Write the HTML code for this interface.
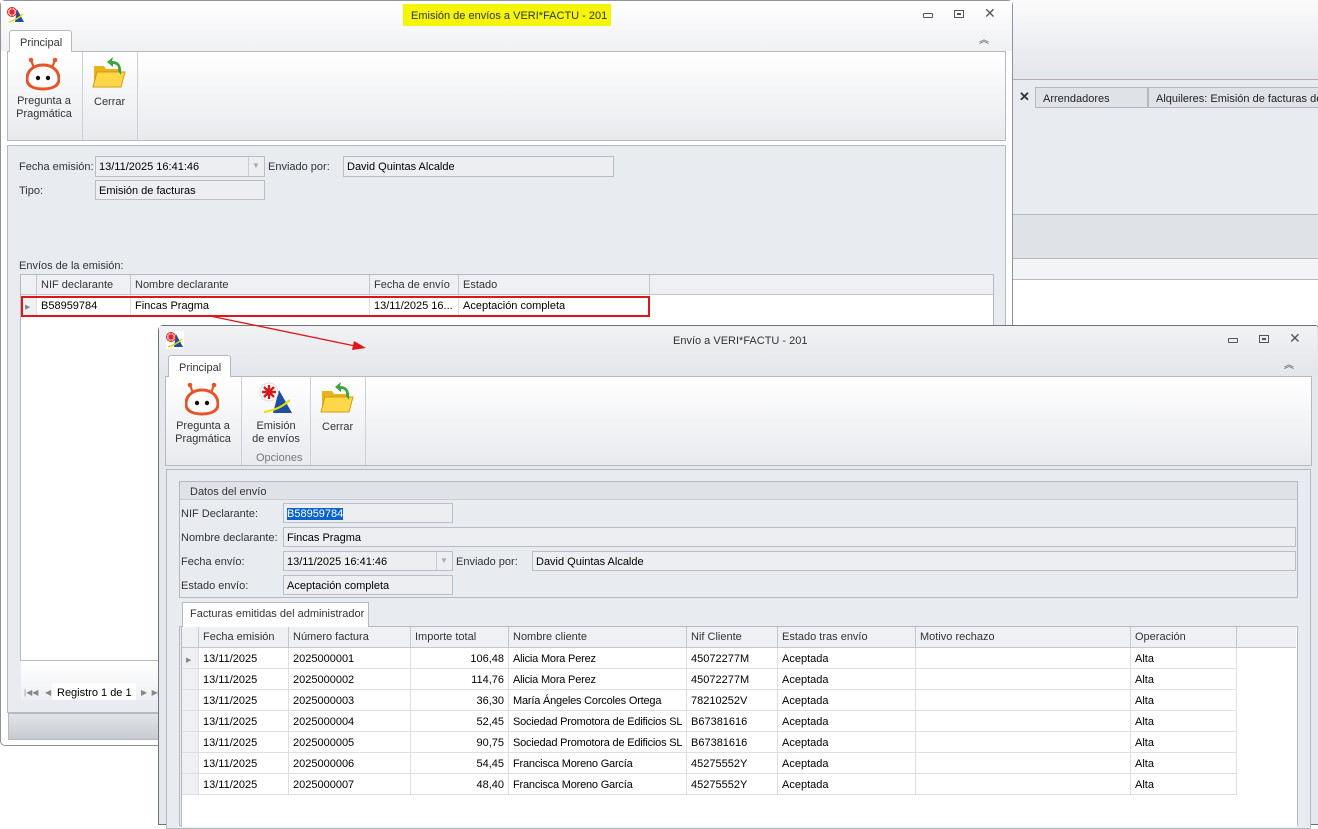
<!DOCTYPE html>
<html><head><meta charset="utf-8">
<style>
*{box-sizing:border-box;margin:0;padding:0}
body{width:1318px;height:822px;overflow:hidden;background:#fff;font-family:"Liberation Sans",Tahoma,sans-serif;font-size:11px;color:#000;position:relative}
.a{position:absolute}
.t{position:absolute;white-space:nowrap;line-height:14px}
.inp{position:absolute;background:#eceef1;border:1px solid #b9bec6;padding:3px 3px 2px;line-height:14px;white-space:nowrap;overflow:hidden}
.g{color:#333}
.hdr{position:absolute;background:#eef0f3;border-right:1px solid #c3c7ce;border-bottom:1px solid #c3c7ce;padding:3px 4px;line-height:14px;color:#333;white-space:nowrap}
.c{position:absolute;border-right:1px solid #dcdfe4;border-bottom:1px solid #dcdfe4;padding:4px 4px 3px;line-height:14px;white-space:nowrap;background:#fff}
</style></head><body>

<div class="a" style="left:1010px;top:0;width:308px;height:80px;background:linear-gradient(#fbfbfc,#e2e5ea)"></div>
<div class="a" style="left:1010px;top:79px;width:308px;height:1px;background:#b9a6c0"></div>
<div class="a" style="left:1010px;top:80px;width:308px;height:134px;background:#e8ebf0"></div>
<div class="t" style="left:1019px;top:90px;font-weight:bold;color:#333;font-size:13px">✕</div>
<div class="a" style="left:1035px;top:87px;width:113px;height:21px;background:#dfe2e7;border:1px solid #b5bac2"></div>
<div class="t" style="left:1043px;top:92px;color:#222">Arrendadores</div>
<div class="a" style="left:1148px;top:87px;width:175px;height:21px;background:#dfe2e7;border:1px solid #b5bac2"></div>
<div class="t" style="left:1156px;top:92px;color:#222">Alquileres: Emisión de facturas de</div>
<div class="a" style="left:1010px;top:214px;width:308px;height:45px;background:#dfe2e6;border-top:1px solid #b5bac2;border-bottom:1px solid #b5bac2"></div>
<div class="a" style="left:1010px;top:259px;width:308px;height:21px;background:#f3f4f6;border-bottom:1px solid #b5bac2"></div>

<!-- Window 1 -->
<div class="a" style="left:0;top:0;width:1013px;height:746px;background:#fff;border:1px solid #8e939b;border-radius:5px"></div>
<div class="a" style="left:1px;top:1px;width:1011px;height:50px;background:linear-gradient(#fff,#f0f1f3)"></div>
<svg class="a" style="left:7px;top:6px" width="18" height="18" viewBox="0 0 18 18"><rect x="0" y="0" width="18" height="18" fill="#fff"/><path d="M10 3 L17 16 L8 16Z" fill="#1d4fa0"/><circle cx="5" cy="6" r="4.5" fill="#fff" stroke="#d22" stroke-width="1"/><path d="M5 2v8M1.5 6h7M2.5 3.5l5 5M7.5 3.5l-5 5" stroke="#d22" stroke-width="1.3"/><path d="M2 16 Q10 14 16 8" stroke="#e8d700" stroke-width="1.5" fill="none"/></svg>
<div class="a" style="left:403px;top:4px;width:208px;height:22px;background:#f5f50a"></div>
<div class="t" style="left:411px;top:9px;color:#333">Emisión de envíos a VERI*FACTU - 201</div>
<div class="a" style="left:923px;top:13px;width:10px;height:5px;border:1px solid #555;border-radius:1px"></div>
<div class="a" style="left:954px;top:10px;width:10px;height:8px;border:1px solid #555"></div><div class="a" style="left:957px;top:13px;width:4px;height:2px;background:#555"></div>
<div class="t" style="left:984px;top:6px;font-size:14px;color:#555">✕</div>
<div class="t" style="left:979px;top:34px;font-size:10px;color:#444">︽</div>
<div class="a" style="left:9px;top:30px;width:63px;height:22px;background:#fff;border:1px solid #b5bac2;border-bottom:none;border-radius:3px 3px 0 0;z-index:2"></div>
<div class="t" style="left:20px;top:36px;z-index:3;color:#333">Principal</div>
<div class="a" style="left:7px;top:51px;width:999px;height:90px;background:linear-gradient(#fff,#e8eaee);border:1px solid #b5bac2"></div>
<div class="a" style="left:82px;top:52px;width:1px;height:88px;background:#cdd1d7"></div>
<div class="a" style="left:137px;top:52px;width:1px;height:88px;background:#cdd1d7"></div>
<svg class="a" style="left:26px;top:57px" width="34" height="34" viewBox="0 0 34 34"><circle cx="5" cy="3" r="2.3" fill="#e8542a"/><circle cx="29" cy="3" r="2.3" fill="#e8542a"/><path d="M5 3 L8 11 M29 3 L26 11" stroke="#e8542a" stroke-width="2.2"/><path d="M17 8 C28 8 33 15 33 22 C33 29 26 32 17 32 C8 32 1 29 1 22 C1 15 6 8 17 8Z" fill="#fff" stroke="#e8542a" stroke-width="3"/><circle cx="12" cy="21" r="2.2" fill="#111"/><circle cx="22" cy="21" r="2.2" fill="#111"/></svg>
<svg class="a" style="left:92px;top:57px" width="34" height="32" viewBox="0 0 34 32"><path d="M2 9h10l2 3h14v18H2Z" fill="#e8b21a"/><path d="M5 15h28l-4 15H1Z" fill="#ffd84a" stroke="#d49a10" stroke-width="1"/><path d="M20 4 C28 4 30 10 29 18 L26 14 C27 10 25 7 21 7 L21 10 L15 5 L21 0Z" fill="#3aa53a"/></svg>
<div class="t" style="left:14px;top:95px;color:#333;text-align:center;width:60px;line-height:13px">Pregunta a<br>Pragmática</div>
<div class="t" style="left:94px;top:95px;color:#333">Cerrar</div>
<div class="a" style="left:7px;top:145px;width:999px;height:568px;background:#e8ebf0;border:1px solid #b5bac2"></div>
<div class="t g" style="left:19px;top:160px">Fecha emisión:</div>
<div class="inp" style="left:95px;top:156px;width:170px;height:21px">13/11/2025 16:41:46</div>
<div class="a" style="left:248px;top:157px;width:1px;height:19px;background:#ccc"></div>
<div class="t" style="left:252px;top:159px;font-size:8px;color:#aaa">▼</div>
<div class="t g" style="left:268px;top:160px">Enviado por:</div>
<div class="inp" style="left:343px;top:156px;width:271px;height:21px">David Quintas Alcalde</div>
<div class="t g" style="left:19px;top:184px">Tipo:</div>
<div class="inp" style="left:95px;top:180px;width:170px;height:20px">Emisión de facturas</div>
<div class="t g" style="left:19px;top:259px">Envíos de la emisión:</div>
<div class="a" style="left:20px;top:274px;width:974px;height:387px;background:#fff;border:1px solid #b5bac2"></div>
<div class="hdr" style="left:21px;top:275px;width:16px;height:20px"></div>
<div class="hdr" style="left:37px;top:275px;width:94px;height:20px">NIF declarante</div>
<div class="hdr" style="left:131px;top:275px;width:239px;height:20px">Nombre declarante</div>
<div class="hdr" style="left:370px;top:275px;width:89px;height:20px">Fecha de envío</div>
<div class="hdr" style="left:459px;top:275px;width:191px;height:20px">Estado</div>
<div class="hdr" style="left:650px;top:275px;width:343px;height:20px;border-right:none"></div>
<div class="c" style="left:21px;top:295px;width:16px;height:21px;background:#eef0f3"><span style="font-size:7px;color:#888">▶</span></div>
<div class="c" style="left:37px;top:295px;width:94px;height:21px">B58959784</div>
<div class="c" style="left:131px;top:295px;width:239px;height:21px">Fincas Pragma</div>
<div class="c" style="left:370px;top:295px;width:89px;height:21px">13/11/2025 16...</div>
<div class="c" style="left:459px;top:295px;width:191px;height:21px">Aceptación completa</div>
<div class="a" style="left:21px;top:296px;width:629px;height:21px;border:2px solid #e0141b"></div>
<div class="a" style="left:21px;top:660px;width:972px;height:40px;background:linear-gradient(#fff,#eef0f3);border-top:1px solid #b5bac2"></div>
<div class="t" style="left:24px;top:686px;font-size:8px;color:#888">|◀◀ &nbsp; ◀</div>
<div class="a" style="left:52px;top:683px;width:84px;height:17px;background:#fff"></div>
<div class="t" style="left:57px;top:686px">Registro 1 de 1</div>
<div class="t" style="left:141px;top:686px;font-size:8px;color:#888">▶ &nbsp;▶▶</div>
<div class="a" style="left:8px;top:713px;width:998px;height:27px;background:linear-gradient(#e2e4e8,#c7cad0);border:1px solid #b5bac2"></div>

<svg class="a" style="left:200px;top:310px;z-index:5" width="180" height="50"><line x1="10" y1="6" x2="160" y2="37" stroke="#e0141b" stroke-width="1.3"/><path d="M166 38 L154 31 L152 40Z" fill="#e0141b"/></svg>

<!-- Window 2 -->
<div class="a" style="left:158px;top:325px;width:1162px;height:500px;background:#e4e7eb;border:1px solid #6e737b;border-radius:5px 5px 0 0"></div>
<div class="a" style="left:159px;top:326px;width:1158px;height:50px;background:linear-gradient(#f1f2f4,#e3e6ea)"></div>
<svg class="a" style="left:166px;top:331px" width="18" height="18" viewBox="0 0 18 18"><rect width="18" height="18" fill="#fff"/><path d="M10 3 L17 16 L8 16Z" fill="#1d4fa0"/><circle cx="5" cy="6" r="4.5" fill="#fff" stroke="#d22"/><path d="M5 2v8M1.5 6h7M2.5 3.5l5 5M7.5 3.5l-5 5" stroke="#d22" stroke-width="1.3"/><path d="M2 16 Q10 14 16 8" stroke="#e8d700" stroke-width="1.5" fill="none"/></svg>
<div class="t" style="left:673px;top:334px;color:#333">Envío a VERI*FACTU - 201</div>
<div class="a" style="left:1228px;top:338px;width:10px;height:5px;border:1px solid #555;border-radius:1px"></div>
<div class="a" style="left:1259px;top:335px;width:10px;height:8px;border:1px solid #555"></div><div class="a" style="left:1262px;top:338px;width:4px;height:2px;background:#555"></div>
<div class="t" style="left:1289px;top:331px;font-size:14px;color:#555">✕</div>
<div class="t" style="left:1284px;top:359px;font-size:10px;color:#444">︽</div>
<div class="a" style="left:168px;top:355px;width:63px;height:22px;background:#fff;border:1px solid #b5bac2;border-bottom:none;border-radius:3px 3px 0 0;z-index:2"></div>
<div class="t" style="left:179px;top:361px;z-index:3;color:#333">Principal</div>
<div class="a" style="left:165px;top:376px;width:1147px;height:90px;background:linear-gradient(#fff,#e8eaee);border:1px solid #b5bac2"></div>
<div class="a" style="left:241px;top:377px;width:1px;height:88px;background:#cdd1d7"></div>
<div class="a" style="left:310px;top:377px;width:1px;height:88px;background:#cdd1d7"></div>
<div class="a" style="left:365px;top:377px;width:1px;height:88px;background:#cdd1d7"></div>
<svg class="a" style="left:185px;top:382px" width="34" height="34" viewBox="0 0 34 34"><circle cx="5" cy="3" r="2.3" fill="#e8542a"/><circle cx="29" cy="3" r="2.3" fill="#e8542a"/><path d="M5 3 L8 11 M29 3 L26 11" stroke="#e8542a" stroke-width="2.2"/><path d="M17 8 C28 8 33 15 33 22 C33 29 26 32 17 32 C8 32 1 29 1 22 C1 15 6 8 17 8Z" fill="#fff" stroke="#e8542a" stroke-width="3"/><circle cx="12" cy="21" r="2.2" fill="#111"/><circle cx="22" cy="21" r="2.2" fill="#111"/></svg>
<svg class="a" style="left:259px;top:382px" width="34" height="34" viewBox="0 0 34 34"><path d="M20 8 L33 31 L14 31Z" fill="#1d4fa0"/><circle cx="10" cy="10" r="9" fill="#fff" stroke="#ddd"/><path d="M10 3v14M3 10h14M5 5l10 10M15 5L5 15" stroke="#d41a1a" stroke-width="2.4"/><path d="M5 30 Q20 28 31 18" stroke="#e8e000" stroke-width="2" fill="none"/></svg>
<svg class="a" style="left:320px;top:382px" width="34" height="32" viewBox="0 0 34 32"><path d="M2 9h10l2 3h14v18H2Z" fill="#e8b21a"/><path d="M5 15h28l-4 15H1Z" fill="#ffd84a" stroke="#d49a10" stroke-width="1"/><path d="M20 4 C28 4 30 10 29 18 L26 14 C27 10 25 7 21 7 L21 10 L15 5 L21 0Z" fill="#3aa53a"/></svg>
<div class="t" style="left:173px;top:420px;color:#333;text-align:center;width:60px;line-height:13px">Pregunta a<br>Pragmática</div>
<div class="t" style="left:250px;top:420px;color:#333;text-align:center;width:52px;line-height:13px">Emisión<br>de envíos</div>
<div class="t" style="left:256px;top:451px;color:#777">Opciones</div>
<div class="t" style="left:322px;top:420px;color:#333">Cerrar</div>
<div class="a" style="left:166px;top:469px;width:1145px;height:360px;background:#e8ebf0;border:1px solid #b5bac2"></div>
<div class="a" style="left:179px;top:481px;width:1119px;height:117px;border:1px solid #b5bac2"></div>
<div class="a" style="left:180px;top:482px;width:1117px;height:18px;background:#dfe2e7;border-bottom:1px solid #c8ccd2"></div>
<div class="t" style="left:190px;top:485px;color:#333">Datos del envío</div>
<div class="t g" style="left:181px;top:507px">NIF Declarante:</div>
<div class="inp" style="left:283px;top:503px;width:170px;height:20px"><span style="background:#0a64c8;color:#fff">B58959784</span></div>
<div class="t g" style="left:181px;top:531px">Nombre declarante:</div>
<div class="inp" style="left:283px;top:527px;width:1013px;height:20px">Fincas Pragma</div>
<div class="t g" style="left:181px;top:555px">Fecha envío:</div>
<div class="inp" style="left:283px;top:551px;width:170px;height:20px">13/11/2025 16:41:46</div>
<div class="a" style="left:436px;top:552px;width:1px;height:18px;background:#ccc"></div>
<div class="t" style="left:440px;top:554px;font-size:8px;color:#aaa">▼</div>
<div class="t g" style="left:456px;top:555px">Enviado por:</div>
<div class="inp" style="left:532px;top:551px;width:764px;height:20px">David Quintas Alcalde</div>
<div class="t g" style="left:181px;top:579px">Estado envío:</div>
<div class="inp" style="left:283px;top:575px;width:170px;height:20px">Aceptación completa</div>
<div class="a" style="left:182px;top:602px;width:187px;height:25px;background:#fff;border:1px solid #b5bac2;border-bottom:none;z-index:2"></div>
<div class="t" style="left:190px;top:607px;z-index:3;color:#333">Facturas emitidas del administrador</div>
<div class="a" style="left:179px;top:626px;width:1119px;height:200px;border:1px solid #b5bac2;background:#e8ebf0"></div>
<div class="a" style="left:181px;top:627px;width:1116px;height:200px;background:#fff;border-left:1px solid #b5bac2"></div>
<div class="hdr" style="left:182px;top:627px;width:17px;height:21px"></div>
<div class="hdr" style="left:199px;top:627px;width:90px;height:21px">Fecha emisión</div>
<div class="hdr" style="left:289px;top:627px;width:122px;height:21px">Número factura</div>
<div class="hdr" style="left:411px;top:627px;width:98px;height:21px">Importe total</div>
<div class="hdr" style="left:509px;top:627px;width:178px;height:21px">Nombre cliente</div>
<div class="hdr" style="left:687px;top:627px;width:91px;height:21px">Nif Cliente</div>
<div class="hdr" style="left:778px;top:627px;width:138px;height:21px">Estado tras envío</div>
<div class="hdr" style="left:916px;top:627px;width:215px;height:21px">Motivo rechazo</div>
<div class="hdr" style="left:1131px;top:627px;width:106px;height:21px">Operación</div>
<div class="hdr" style="left:1237px;top:627px;width:59px;height:21px;border-right:none"></div>

<div id="rows"></div>
<script>
var d=[["2025000001","106,48","Alicia Mora Perez","45072277M"],["2025000002","114,76","Alicia Mora Perez","45072277M"],["2025000003","36,30","María Ángeles Corcoles Ortega","78210252V"],["2025000004","52,45","Sociedad Promotora de Edificios SL","B67381616"],["2025000005","90,75","Sociedad Promotora de Edificios SL","B67381616"],["2025000006","54,45","Francisca Moreno García","45275552Y"],["2025000007","48,40","Francisca Moreno García","45275552Y"]];
var h="";
d.forEach(function(r,i){var y=648+i*21;
h+='<div class="c" style="left:182px;top:'+y+'px;width:17px;height:21px;background:#eef0f3">'+(i==0?'<span style="font-size:7px;color:#888">▶</span>':'')+'</div>';
h+='<div class="c" style="left:199px;top:'+y+'px;width:90px;height:21px">13/11/2025</div>';
h+='<div class="c" style="left:289px;top:'+y+'px;width:122px;height:21px">'+r[0]+'</div>';
h+='<div class="c" style="left:411px;top:'+y+'px;width:98px;height:21px;text-align:right">'+r[1]+'</div>';
h+='<div class="c" style="left:509px;top:'+y+'px;width:178px;height:21px;overflow:hidden;letter-spacing:-0.2px">'+r[2]+'</div>';
h+='<div class="c" style="left:687px;top:'+y+'px;width:91px;height:21px">'+r[3]+'</div>';
h+='<div class="c" style="left:778px;top:'+y+'px;width:138px;height:21px">Aceptada</div>';
h+='<div class="c" style="left:916px;top:'+y+'px;width:215px;height:21px"></div>';
h+='<div class="c" style="left:1131px;top:'+y+'px;width:106px;height:21px">Alta</div>';});
document.getElementById("rows").innerHTML=h;
</script>
</body></html>
